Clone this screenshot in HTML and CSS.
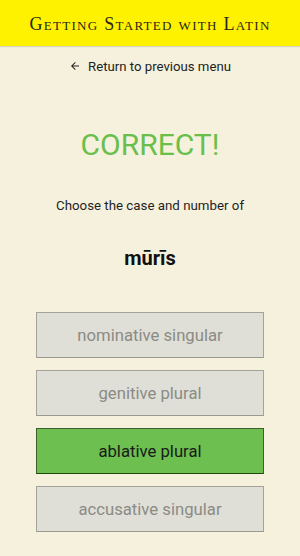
FILE: index.html
```html
<!DOCTYPE html>
<html>
<head>
<meta charset="utf-8">
<link rel="stylesheet" href="styles.css">
</head>
<body>
<header class="topbar"><h1 class="title">Getting Started with Latin</h1></header>
<main class="content">
  <a class="back"><svg class="arrow" viewBox="0 0 24 24" width="12" height="12"><path d="M20 11H7.8l5.6-5.6L12 4l-8 8 8 8 1.4-1.4L7.8 13H20z" fill="#222"/></svg><span>Return to previous menu</span></a>
  <div class="result">CORRECT!</div>
  <p class="prompt">Choose the case and number of</p>
  <div class="word">mūrīs</div>
  <div class="options">
    <div class="opt">nominative singular</div>
    <div class="opt">genitive plural</div>
    <div class="opt opt-right">ablative plural</div>
    <div class="opt">accusative singular</div>
  </div>
</main>
</body>
</html>
```
FILE: styles.css
```css
html, body { margin: 0; padding: 0; }
body {
  background: #f6f1dd;
  font-family: Roboto, "Liberation Sans", sans-serif;
  width: 300px;
  height: 556px;
  overflow: hidden;
}
.topbar {
  background: #fff200;
  height: 46px;
  display: flex;
  align-items: center;
  justify-content: center;
  box-shadow: 0 1px 1px rgba(0,0,0,0.12);
}
.title {
  margin: 0;
  font-family: "Liberation Serif", serif;
  font-weight: normal;
  font-variant: small-caps;
  font-size: 18px;
  letter-spacing: 1.3px;
  color: #2a2616;
  padding-top: 2px;
}
.content {
  display: flex;
  flex-direction: column;
  align-items: center;
}
.back {
  margin-top: 12px;
  display: flex;
  align-items: center;
  gap: 7px;
  font-size: 13.2px;
  color: #222;
  height: 16px;
}
.arrow { display: block; }
.result {
  margin-top: 54px;
  font-size: 30px;
  color: #6abf4b;
  line-height: 34px;
}
.prompt {
  margin: 36px 0 0;
  font-size: 13.3px;
  color: #1f1f1f;
  line-height: 16px;
}
.word {
  margin-top: 33px;
  font-size: 20px;
  font-weight: bold;
  color: #111;
  line-height: 22px;
}
.options {
  margin-top: 43px;
  display: flex;
  flex-direction: column;
  gap: 12px;
}
.opt {
  box-sizing: border-box;
  width: 228px;
  height: 46px;
  display: flex;
  align-items: center;
  justify-content: center;
  background: #dfdfd7;
  border: 1px solid #a3a39c;
  border-bottom-color: #999991;
  color: #8b8b86;
  font-size: 16.7px;
}
.opt-right {
  background: #6dbf4f;
  border-color: #3f5f30;
  border-bottom-color: #1e4a10;
  color: #1a1a1a;
}
```
